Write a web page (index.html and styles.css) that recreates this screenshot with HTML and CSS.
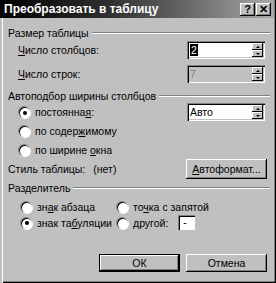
FILE: index.html
```html
<!DOCTYPE html>
<html lang="ru">
<head>
    <meta charset="UTF-8">
    <title>Преобразовать в таблицу</title>
    <link rel="stylesheet" href="styles.css">
</head>
<body>
    <div class="dialog">
        <div class="titlebar">
            <span class="title">Преобразовать в таблицу</span>
            <div class="title-btns">
                <span class="tbtn">?</span>
                <span class="tbtn">&#x2715;</span>
            </div>
        </div>

        <div class="content">
            <div class="group-head"><span>Размер таблицы</span><i class="rule"></i></div>
            <div class="row row-first indent">
                <span class="lbl"><u>Ч</u>исло столбцов:</span>
                <div class="spin">
                    <span class="value"><b class="sel">2</b></span>
                    <span class="arrows"><span class="arr up"></span><span class="arr down"></span></span>
                </div>
            </div>
            <div class="row indent">
                <span class="lbl"><u>Ч</u>исло строк:</span>
                <div class="spin disabled">
                    <span class="value">7</span>
                    <span class="arrows"><span class="arr up"></span><span class="arr down"></span></span>
                </div>
            </div>

            <div class="group-head head-2"><span>Автоподбор ширины столбцов</span><i class="rule"></i></div>
            <div class="row radio-row indent">
                <label class="radio"><i class="dot checked"></i><span>постоянна<u>я</u>:</span></label>
                <div class="spin">
                    <span class="value">Авто</span>
                    <span class="arrows"><span class="arr up"></span><span class="arr down"></span></span>
                </div>
            </div>
            <div class="row radio-row small indent">
                <label class="radio"><i class="dot"></i><span>по содер<u>ж</u>имому</span></label>
            </div>
            <div class="row radio-row small indent">
                <label class="radio"><i class="dot"></i><span>по ширине <u>о</u>кна</span></label>
            </div>
            <div class="row style-row">
                <span class="lbl">Стиль таблицы:</span>
                <span class="lbl none">(нет)</span>
                <button class="btn"><u>А</u>втоформат...</button>
            </div>

            <div class="group-head head-3"><span>Разделитель</span><i class="rule"></i></div>
            <div class="sep-grid">
                <label class="radio"><i class="dot"></i><span>зн<u>а</u>к абзаца</span></label>
                <label class="radio"><i class="dot"></i><span>то<u>ч</u>ка с запятой</span></label>
                <label class="radio"><i class="dot checked"></i><span>знак та<u>б</u>уляции</span></label>
                <div class="other">
                    <label class="radio"><i class="dot"></i><span><u>д</u>ругой:</span></label>
                    <span class="char-box">-</span>
                </div>
            </div>

            <div class="actions">
                <button class="btn default">ОК</button>
                <button class="btn">Отмена</button>
            </div>
        </div>
    </div>
</body>
</html>
```

FILE: styles.css
```css
body {
    margin: 0;
    background-color: #c0c0c0;
    font-family: 'Liberation Sans', Arial, sans-serif;
    font-size: 10.5px;
    color: #000;
}

.dialog {
    width: 276px;
    height: 283px;
    box-sizing: border-box;
    padding: 0 3px 3px 3px;
    background-color: #c0c0c0;
    box-shadow: inset 2px 0 #c0c0c0, inset 3px 0 #fff, inset -1px -1px #000, inset -2px -2px #808080;
    display: flex;
    flex-direction: column;
    overflow: hidden;
}

.titlebar {
    height: 18px;
    flex-shrink: 0;
    margin: 0 -1px 0 -3px;
    padding: 0 3px 0 4px;
    background: linear-gradient(to right, #000 0%, #303030 40%, #a8a8a8 100%);
    display: flex;
    align-items: center;
    justify-content: space-between;
}

.title {
    color: #fff;
    font-weight: bold;
    font-size: 12px;
}

.title-btns {
    display: flex;
    gap: 1px;
}

.tbtn {
    width: 15px;
    height: 13px;
    box-sizing: border-box;
    background-color: #c0c0c0;
    box-shadow: inset -1px -1px #000, inset 1px 1px #fff, inset -2px -2px #808080;
    font-weight: bold;
    font-size: 11px;
    line-height: 13px;
    text-align: center;
}

.content {
    padding: 0 3px 0 5px;
    display: flex;
    flex-direction: column;
}

/* заголовки групп */
.group-head {
    height: 14px;
    flex-shrink: 0;
    margin-top: 8px;
    display: flex;
    align-items: center;
    gap: 3px;
}

.rule {
    flex: 1;
    height: 0;
    border-top: 1px solid #808080;
    border-bottom: 1px solid #fff;
}

.head-2 {
    margin-top: 6px;
}

.head-3 {
    margin-top: 2px;
}

.row {
    display: flex;
    align-items: center;
    justify-content: space-between;
    height: 18px;
    flex-shrink: 0;
}

.row-first {
    margin-top: 1px;
    margin-bottom: 6px;
}

.indent {
    padding-left: 10px;
}

.radio-row {
    margin-top: 0;
}

.radio-row.small {
    margin-top: 1px;
}

.spin {
    width: 78px;
    height: 18px;
    margin-right: 5px;
    box-sizing: border-box;
    background-color: #fff;
    box-shadow: inset 1px 1px #808080, inset 2px 2px #000, inset -1px -1px #fff, inset -2px -2px #c0c0c0;
    display: flex;
    align-items: center;
    padding: 2px 2px 2px 3px;
}

.spin.disabled {
    background-color: #c0c0c0;
    color: #808080;
}

.value {
    flex: 1;
}

.sel {
    background-color: #000;
    color: #fff;
    font-weight: normal;
    padding: 0 1px;
}

.arrows {
    width: 11px;
    height: 14px;
    display: flex;
    flex-direction: column;
}

.arr {
    flex: 1;
    background-color: #c0c0c0;
    box-shadow: inset -1px -1px #000, inset 1px 1px #fff;
    display: flex;
    align-items: center;
    justify-content: center;
}

.arr::after {
    content: '';
    border-left: 2px solid transparent;
    border-right: 2px solid transparent;
}

.arr.up::after {
    border-bottom: 2px solid #000;
}

.arr.down::after {
    border-top: 2px solid #000;
}

.radio {
    display: flex;
    align-items: center;
    gap: 5px;
    white-space: nowrap;
}

.dot {
    width: 12px;
    height: 12px;
    flex-shrink: 0;
    box-sizing: border-box;
    border-radius: 50%;
    background-color: #fff;
    border-top: 1px solid #808080;
    border-left: 1px solid #808080;
    box-shadow: inset 1px 1px #000, 1px 1px 0 #fff;
    display: flex;
    align-items: center;
    justify-content: center;
}

.dot.checked::after {
    content: '';
    width: 4px;
    height: 4px;
    border-radius: 50%;
    background-color: #000;
}

.style-row {
    height: 20px;
    margin-top: 0;
    justify-content: flex-start;
}

.none {
    margin-left: 8px;
    flex: 1;
}

.btn {
    width: 81px;
    height: 20px;
    padding: 0;
    border: none;
    background-color: #c0c0c0;
    box-shadow: inset -1px -1px #000, inset 1px 1px #fff, inset -2px -2px #808080;
    font-family: inherit;
    font-size: 10.5px;
    color: #000;
}

.style-row .btn {
    margin-right: 3px;
}

.btn.default {
    box-shadow: inset 0 0 0 1px #000, inset -2px -2px #000, inset 2px 2px #fff, inset -3px -3px #808080;
}

.sep-grid {
    margin-top: 4px;
    padding-left: 12px;
    display: grid;
    grid-template-columns: 96px 1fr;
    row-gap: 1px;
    align-items: center;
}

.sep-grid .radio {
    height: 15px;
}

.other {
    display: flex;
    align-items: center;
    gap: 10px;
}

.char-box {
    width: 17px;
    height: 15px;
    box-sizing: border-box;
    padding-left: 5px;
    background-color: #fff;
    box-shadow: inset 1px 1px #808080, inset 2px 2px #000;
    line-height: 15px;
}

.actions {
    margin-top: 24px;
    display: flex;
    justify-content: flex-end;
    gap: 6px;
    padding-right: 3px;
}

.actions .btn {
    height: 18px;
}
```
